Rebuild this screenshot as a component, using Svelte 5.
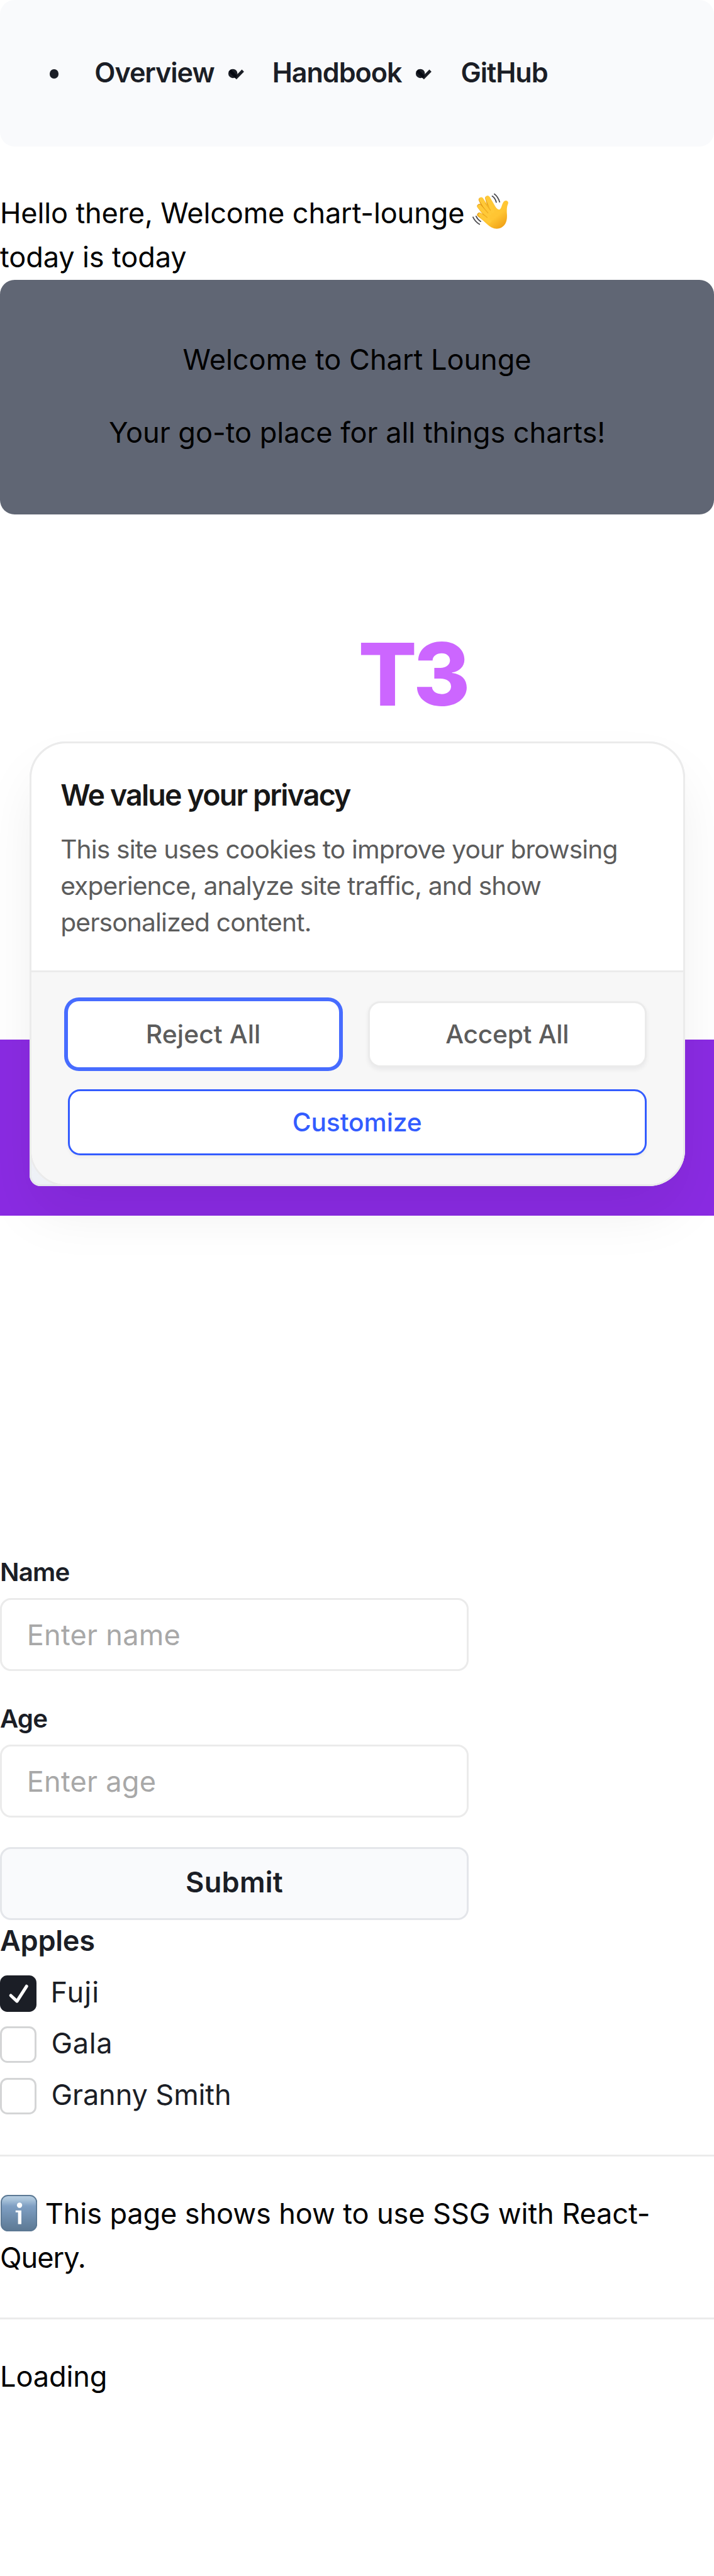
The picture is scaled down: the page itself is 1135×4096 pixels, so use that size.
<script>
  const nav = [
    { label: 'Overview', menu: true },
    { label: 'Handbook', menu: true },
    { label: 'GitHub', menu: false }
  ];
  const fields = [
    { id: 'name', label: 'Name', hint: 'Enter name' },
    { id: 'age', label: 'Age', hint: 'Enter age' }
  ];
  let apples = $state([
    { name: 'Fuji', on: true },
    { name: 'Gala', on: false },
    { name: 'Granny Smith', on: false }
  ]);
</script>

<div class="page">
  <header>
    <span class="bullet"></span>
    <nav>
      {#each nav as item}
        <a href="#top" class={item.label.toLowerCase()}>
          {item.label}
          {#if item.menu}
            <svg width="30" height="24" viewBox="0 0 30 24">
              <circle cx="9.5" cy="11.3" r="7.5" fill="#1b1e26" />
              <path d="M4.5 6.5 15.3 17.4 26 6.5" fill="none" stroke="#1b1e26" stroke-width="5" />
              <path d="M4.5 6.5 15 17" fill="none" stroke="#050811" stroke-width="5" />
            </svg>
          {/if}
        </a>
      {/each}
    </nav>
  </header>

  <section class="greeting">
    <p>
      <span class="hello">Hello there, Welcome chart-lounge</span>
      <svg class="wave" width="60" height="62" viewBox="0 0 60 62">
        <defs>
          <linearGradient id="skin" x1="0.1" y1="0" x2="0.85" y2="1">
            <stop offset="0" stop-color="#ffcb3b" />
            <stop offset="0.65" stop-color="#ffc532" />
            <stop offset="1" stop-color="#ee9c12" />
          </linearGradient>
        </defs>
        <g fill="none" stroke="#e39a14" stroke-linecap="round">
          <path d="M25 34 14 11" stroke-width="7.6" />
          <path d="M31 30 24.5 8.5" stroke-width="7.4" />
          <path d="M24 38 11.5 21.5" stroke-width="7.6" />
          <path d="M25 46 11.5 35.5" stroke-width="7.4" />
        </g>
        <path
          d="M10.5 33C8.500 36 12 40 16 43.500L24 51C30 57 37 59.500 43.500 58C54 55 57.500 46 56.500 34C56 27 56.500 22 58 18.500C60 14 57 11.500 53.500 12.500C49 14 48.500 22 46 25.500C43.500 29 40 26 37.500 22L28.500 6.500C25.500 2 20 5 21.500 9.500L29 26L17.500 8.500C14.500 5 9 8.500 11.500 12.500L24 31L14 20C10.500 17 6.500 21 9 24.500L23 41L15.500 34.500C13.500 32.500 11.500 32 10.500 33Z"
          fill="url(#skin)"
        />
        <g fill="none" stroke="#ffc938" stroke-width="5.600" stroke-linecap="round">
          <path d="M28 34 14.500 11.500M33 30 25 8.500M26 40 11.500 21.800M28 46 12.300 35.600" />
        </g>
        <g fill="none" stroke="#e9a21c" stroke-width="1.200" stroke-linecap="round" opacity="0.8">
          <path d="M17.500 23 25.500 32.500M21 16.500 29.500 28M17 34 24 40" />
        </g>
        <g fill="none" stroke="#4c4c50" stroke-width="1.900" stroke-linecap="round">
          <path d="M32.500 5Q37.500 8.500 39 15M36 1.500Q42 6 44.500 14.500M1 39.500Q4.500 47 11.500 51M6 38Q8.500 43.500 13.500 46.500" />
        </g>
      </svg>
    </p>
    <p>today is today</p>
  </section>

  <section class="welcome">
    <p>Welcome to Chart Lounge</p>
    <p>Your go-to place for all things charts!</p>
  </section>

  <h1>T3</h1>
  <div class="band"></div>

  <form>
    {#each fields as f}
      <label class="field">
        <span>{f.label}</span>
        <input id={f.id} placeholder={f.hint} />
      </label>
    {/each}
    <button type="button" class="submit">Submit</button>
  </form>

  <fieldset>
    <h2>Apples</h2>
    {#each apples as apple}
      <label class="option">
        <input type="checkbox" bind:checked={apple.on} />
        <span class="box" class:on={apple.on}>
          {#if apple.on}
            <svg width="60" height="60" viewBox="0 0 60 60">
              <path d="M17.700 33 27.800 42.300 43.500 17.800" fill="none" stroke="#fff" stroke-width="5.200" stroke-linecap="round" stroke-linejoin="round" />
            </svg>
          {/if}
        </span>
        <span class="text {apple.name.toLowerCase()}">{apple.name}</span>
      </label>
    {/each}
  </fieldset>

  <hr />
  <div class="note">
    <p>
      <svg class="info" width="60" height="60" viewBox="0 0 60 60">
        <defs>
          <linearGradient id="tile" x1="0" y1="0" x2="0" y2="1">
            <stop offset="0" stop-color="#b9d0e2" />
            <stop offset="0.12" stop-color="#a9c3da" />
            <stop offset="0.3" stop-color="#7f9fc3" />
            <stop offset="0.6" stop-color="#6f8eae" />
            <stop offset="1" stop-color="#5c7893" />
          </linearGradient>
        </defs>
        <rect x="1" y="1" width="58" height="58" rx="11" fill="url(#tile)" stroke="#5b7894" stroke-width="2" />
        <circle cx="31" cy="17" r="4.300" fill="#fff" />
        <path d="M24.500 25.500H34V48H28.500V28.500H24.500Z" fill="#fff" />
      </svg>
      <span>This page shows how to use SSG with React-</span>
    </p>
    <p class="query">Query.</p>
  </div>
  <hr />
  <p class="loading">Loading</p>

  <div class="consent" role="dialog" aria-label="We value your privacy">
    <div class="card">
      <div class="copy">
        <h3>We value your privacy</h3>
        <p>
          This site uses cookies to improve your browsing<br />
          experience, analyze site traffic, and show<br />
          personalized content.
        </p>
      </div>
      <div class="actions">
        <button class="reject">Reject All</button>
        <button class="accept">Accept All</button>
        <button class="customize">Customize</button>
      </div>
    </div>
  </div>
</div>

<style>
  :global(body) {
    background: #fff;
    overflow: hidden;
  }
  /* Borders are 3.1px so that they still round to three whole pixels after zoom. */
  .page {
    position: relative;
    width: 1170px;
    height: 4221px;
    overflow: hidden;
    zoom: 0.97025;
    font-family: Inter, 'Liberation Sans', sans-serif;
    font-size: 46.5px;
    line-height: 72px;
    letter-spacing: -0.12px;
    font-weight: 420;
    color: #000;
  }
  p, h1, h2, h3 {
    margin: 0;
    white-space: nowrap;
  }
  button, input {
    font: inherit;
    letter-spacing: inherit;
    margin: 0;
    box-sizing: border-box;
  }

  header {
    display: flex;
    align-items: center;
    height: 240px;
    box-sizing: border-box;
    padding: 0 0 2px 81px;
    border-radius: 24px;
    background: #f9fafc;
  }
  .bullet {
    width: 15px;
    height: 15px;
    margin: 4px 59px 0 0;
    border-radius: 50%;
    background: #1b1e26;
  }
  nav {
    display: grid;
    grid-template-columns: 291px 309px auto;
  }
  nav a {
    display: flex;
    align-items: center;
    gap: 21px;
    font-size: 44.5px;
    font-weight: 590;
    letter-spacing: -1.1px;
    color: #1b1e26;
    text-decoration: none;
  }
  nav svg {
    margin-top: 5px;
  }

  .greeting {
    padding-top: 73px;
  }
  .greeting p {
    display: flex;
    align-items: center;
    height: 72px;
  }
  .hello {
    width: 774px;
    letter-spacing: -0.16px;
  }
  .wave {
    flex: none;
    margin-top: -3px;
  }

  .welcome {
    display: flex;
    flex-direction: column;
    align-items: center;
    gap: 48px;
    height: 384px;
    box-sizing: border-box;
    margin-top: 2px;
    padding-top: 94px;
    border-radius: 24px;
    background: #606674;
    letter-spacing: -0.03px;
  }

  h1 {
    margin: 191px 0 0 587px;
    font-size: 142px;
    line-height: 144px;
    font-weight: 820;
    letter-spacing: -6px;
    color: #c6f;
  }
  .band {
    height: 288px;
    margin-top: 526px;
    background: #8a2be2;
  }

  form {
    width: 768px;
    padding-top: 555px;
  }
  .field {
    display: block;
    margin-bottom: 48px;
  }
  .field span {
    display: block;
    margin-bottom: 12px;
    font-size: 41.5px;
    line-height: 60px;
    font-weight: 590;
    letter-spacing: -0.85px;
    color: #1b1e26;
  }
  .field input {
    display: block;
    width: 768px;
    height: 120px;
    padding: 0 41px;
    border: 3.1px solid #ebebeb;
    border-radius: 18px;
    background: #fff;
    letter-spacing: 0.25px;
    outline: none;
  }
  .field input::placeholder {
    color: #a8a8a8;
    opacity: 1;
  }
  .submit {
    display: block;
    width: 768px;
    height: 120px;
    padding: 0 0 4px;
    border: 3.1px solid #e4e6ea;
    border-radius: 18px;
    background: #f9fafc;
    color: #1b1e26;
    font-weight: 590;
    letter-spacing: 0.25px;
  }

  fieldset {
    display: flex;
    flex-direction: column;
    gap: 24px;
    margin: -2px 0 66px;
    padding: 0;
    border: 0;
    color: #1b1e26;
  }
  h2 {
    margin-bottom: -4px;
    font-size: 46.5px;
    font-weight: 590;
    letter-spacing: -0.3px;
  }
  .option {
    display: flex;
    align-items: center;
    gap: 23px;
    height: 60px;
  }
  .option input {
    display: none;
  }
  .box {
    width: 60px;
    height: 60px;
    box-sizing: border-box;
    border: 3.1px solid #d4d5d6;
    border-radius: 12px;
    background: #fff;
  }
  .box.on {
    border: 0;
    background: #1b1e26;
  }
  .box svg {
    display: block;
  }
  .text {
    margin-top: -4px;
    padding-left: 1px;
  }
  .text.fuji {
    padding-left: 0;
    letter-spacing: 1px;
  }
  .text.gala {
    letter-spacing: 0.6px;
  }

  hr {
    height: 3.1px;
    margin: 0;
    border: 0;
    background: #ebebeb;
  }
  .note {
    padding: 58px 0 62px;
  }
  .note p {
    display: flex;
    align-items: center;
    height: 72px;
  }
  .info {
    flex: none;
    margin: -2px 13px 0 1px;
  }
  .note .query {
    letter-spacing: -1px;
  }
  .loading {
    margin-top: 58px;
  }

  .consent {
    position: absolute;
    top: 1215px;
    left: 48px;
    width: 1074px;
    height: 729px;
    border-radius: 60px 60px 60px 18px;
    background: linear-gradient(#f3f6fb, #eef1f6);
    box-shadow: inset 0 0 0 3px #e6e8ec, 0 48px 96px -12px rgba(14, 18, 27, 0.08);
  }
  .card {
    height: 729px;
    box-sizing: border-box;
    overflow: hidden;
    border: 3.1px solid #ebebeb;
    border-radius: 60px;
    background: #fff;
  }
  .copy {
    height: 375px;
    box-sizing: border-box;
    padding: 49.5px 0 0 48px;
    border-bottom: 3.1px solid #ebebeb;
  }
  h3 {
    font-size: 48px;
    font-weight: 570;
    letter-spacing: -1.9px;
    color: #171717;
  }
  .copy p {
    margin-top: 23px;
    font-size: 42px;
    line-height: 60px;
    letter-spacing: -0.88px;
    color: #5c5c5c;
  }
  .actions {
    display: grid;
    grid-template-columns: 444px 456px;
    gap: 36px 48px;
    height: 348px;
    box-sizing: border-box;
    padding: 48px 60px;
    background: #f7f7f7;
  }
  .actions button {
    height: 108px;
    padding: 1px 0 0;
    border: 0;
    border-radius: 20px;
    background: #fff;
    font-size: 42px;
    font-weight: 520;
    color: #5c5c5c;
  }
  .actions .reject {
    border-radius: 18px;
    letter-spacing: 0.1px;
    box-shadow: 0 0 0 6.2px #476cff;
  }
  .actions .accept {
    border: 3.1px solid #ebebeb;
    letter-spacing: -0.3px;
    box-shadow: 0 4px 8px rgba(14, 18, 27, 0.06);
  }
  .actions .customize {
    grid-column: 1 / -1;
    border: 3.1px solid #335cff;
    color: #335cff;
    box-shadow: 0 4px 6px rgba(14, 18, 27, 0.04);
  }
</style>
